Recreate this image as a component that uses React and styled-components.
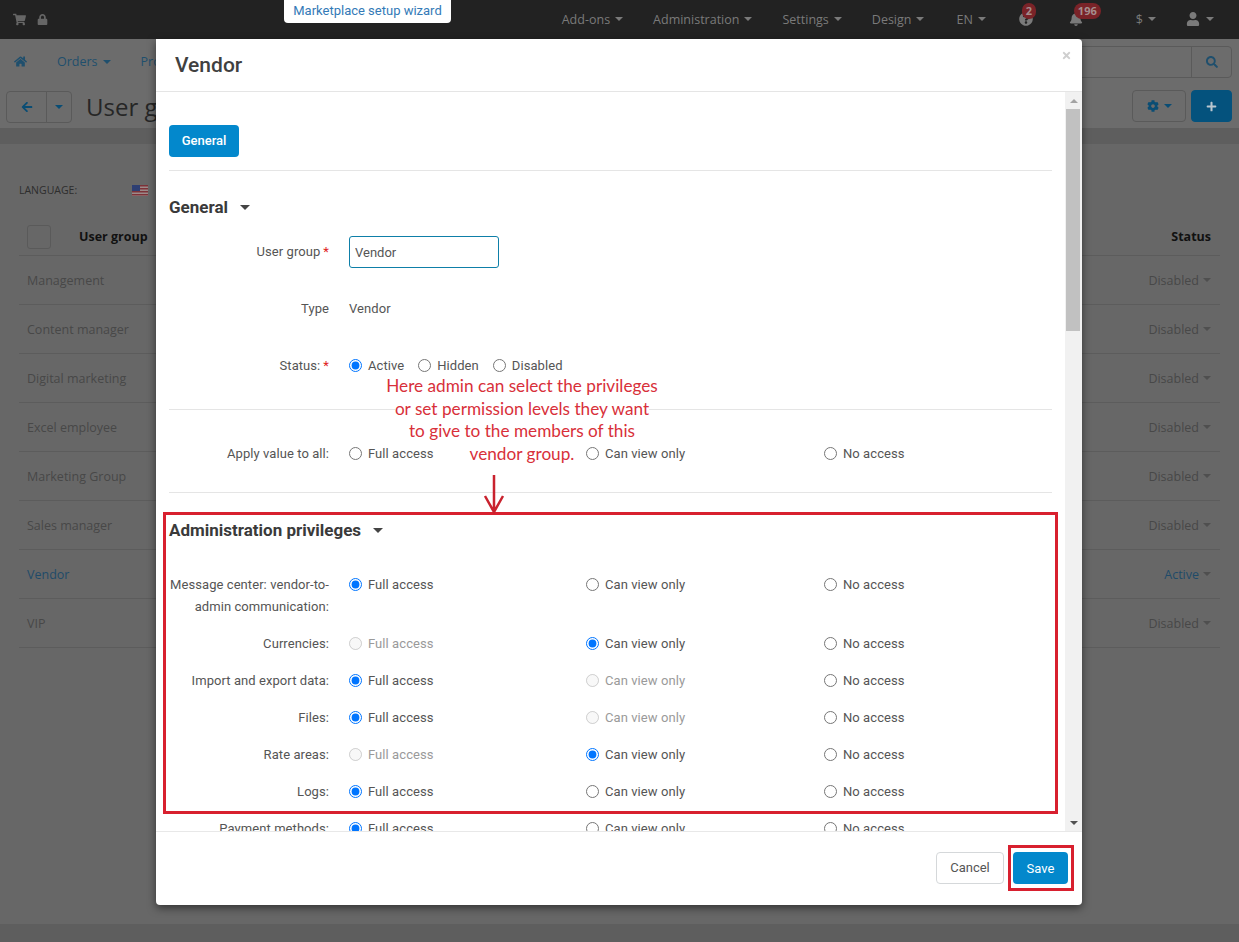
import React from "react";
import styled, { createGlobalStyle } from "styled-components";
import {
  FaShoppingCart,
  FaLock,
  FaHome,
  FaArrowLeft,
  FaSearch,
  FaCog,
  FaPlus,
  FaBell,
  FaUser,
  FaQuestionCircle,
  FaTimes,
} from "react-icons/fa";

const GlobalStyle = createGlobalStyle`
  html, body {
    margin: 0;
    padding: 0;
    background: #666;
  }
  * {
    box-sizing: border-box;
  }
`;

const Page = styled.div`
  position: relative;
  width: 1239px;
  height: 942px;
  overflow: hidden;
  display: flex;
  flex-direction: column;
  background: #676767;
  font-family: "Open Sans", sans-serif;
  font-size: 13px;
`;

/* top bar */
const TopBar = styled.header`
  height: 39px;
  flex: none;
  display: flex;
  align-items: center;
  justify-content: space-between;
  padding: 0 25px 1px 13px;
  background: #222;
  color: #7a7a7a;
`;

const BarGroup = styled.div`
  display: flex;
  align-items: center;
  gap: ${(props) => props.$gap || 11}px;
  color: ${(props) => props.$color || "inherit"};
`;

const NavItem = styled.span`
  display: flex;
  align-items: center;
  position: relative;
  gap: ${(props) => props.$space || 5}px;
  margin-left: ${(props) => props.$left || 0}px;
  font-size: 12.5px;
  white-space: nowrap;
`;

const Caret = styled.i`
  display: inline-block;
  width: 0;
  height: 0;
  border-left: ${(props) => props.$size || 4}px solid transparent;
  border-right: ${(props) => props.$size || 4}px solid transparent;
  border-top: ${(props) => props.$size || 4}px solid ${(props) => props.$color || "currentColor"};
`;

const Badge = styled.span`
  position: absolute;
  top: -9px;
  left: ${(props) => props.$left}px;
  height: 16px;
  padding: 0 4px;
  border-radius: 8px;
  background: #7a2328;
  color: #a58e8e;
  font-size: 11px;
  font-weight: 700;
  line-height: 16px;
`;

const WizardTab = styled.a`
  position: absolute;
  top: 0;
  left: 284px;
  width: 167px;
  height: 23px;
  background: #fff;
  border-radius: 0 0 4px 4px;
  color: #337ab7;
  font-family: Roboto, sans-serif;
  font-size: 13px;
  line-height: 21px;
  text-align: center;
  z-index: 3;
`;

/* header area */
const HeaderArea = styled.div`
  flex: none;
  height: 89px;
  background: #6c6c6c;
  display: flex;
  flex-direction: column;
`;

const SubNav = styled.nav`
  height: 46px;
  display: flex;
  align-items: center;
  justify-content: space-between;
  padding: 0 7px 1px 14px;
  color: #1f4f6d;
`;

const SubLinks = styled.div`
  display: flex;
  align-items: center;
  gap: 30px;
  font-size: 12.5px;
`;

const SubLink = styled.span`
  display: flex;
  align-items: center;
  gap: 5px;
`;

const SearchBox = styled.div`
  width: 180px;
  height: 32px;
  display: flex;
  justify-content: flex-end;
  border: 1px solid #5a5a5a;
  border-radius: 0 4px 4px 0;
`;

const SearchButton = styled.span`
  width: 40px;
  display: flex;
  align-items: center;
  justify-content: center;
  border-left: 1px solid #5a5a5a;
  color: #1f4f6d;
`;

const ToolBar = styled.div`
  height: 43px;
  display: flex;
  align-items: flex-start;
  justify-content: space-between;
  padding: 5px 7px 0 6px;
`;

const ToolLeft = styled.div`
  display: flex;
  align-items: center;
`;

const ToolButton = styled.span`
  height: 32px;
  width: ${(props) => props.$width}px;
  display: flex;
  align-items: center;
  justify-content: center;
  gap: 5px;
  border: 1px solid ${(props) => props.$bg || "#5a5a5a"};
  border-radius: ${(props) => props.$radius || "4px"};
  margin-left: ${(props) => props.$left || 0}px;
  background: ${(props) => props.$bg || "transparent"};
  color: ${(props) => props.$color || "#0a4d74"};
`;

const PageTitle = styled.h1`
  margin: 0 0 0 14px;
  color: #262626;
  font-size: 24px;
  font-weight: 400;
  line-height: 34px;
`;

const Strip = styled.div`
  flex: none;
  height: 16px;
  background: #5e5e5e;
`;

/* user groups table behind the dialog */
const Content = styled.main`
  flex: 1;
  padding: 0 19px;
`;

const Language = styled.div`
  display: flex;
  align-items: center;
  height: 12px;
  margin-top: 40px;
  color: #2d2d2d;
  font-size: 10.5px;
  text-transform: uppercase;
`;

const LanguageLabel = styled.span`
  width: 113px;
`;

const TableHead = styled.div`
  height: 31px;
  margin-top: 29px;
  padding: 0 9px 7px 8px;
  display: flex;
  align-items: center;
  justify-content: space-between;
  border-bottom: 1px solid #5c5c5c;
  color: #111;
  font-size: 12.5px;
  font-weight: 700;
`;

const HeadLeft = styled.div`
  display: flex;
  align-items: center;
  gap: 28px;
`;

const CheckCell = styled.span`
  width: 24px;
  height: 24px;
  border: 1px solid #5a5a5a;
  border-radius: 3px;
`;

const TableRow = styled.div`
  height: 49px;
  padding: 0 9px 0 8px;
  display: flex;
  align-items: center;
  justify-content: space-between;
  border-bottom: 1px solid #5c5c5c;
  color: ${(props) => (props.$active ? "#1f4b69" : "#484848")};
  font-size: 12.5px;
`;

const RowStatus = styled.span`
  display: flex;
  align-items: center;
  gap: 4px;
`;

const BottomStrip = styled.div`
  flex: none;
  height: 18px;
  background: #5e5e5e;
`;

/* dialog */
const Modal = styled.section`
  position: absolute;
  top: 39px;
  left: 156px;
  width: 926px;
  height: 866px;
  display: flex;
  flex-direction: column;
  background: #fff;
  border-radius: 0 4px 4px 4px;
  box-shadow: 0 3px 9px rgba(0, 0, 0, 0.5);
  color: #555;
  font-family: Roboto, sans-serif;
  font-size: 13px;
  z-index: 2;
`;

const ModalHeader = styled.div`
  height: 53px;
  flex: none;
  padding: 0 19px;
  display: flex;
  align-items: center;
  justify-content: space-between;
  border-bottom: 1px solid #e5e5e5;
`;

const ModalTitle = styled.h2`
  margin: 0;
  color: #404040;
  font-size: 21px;
  font-weight: 500;
`;

const CloseIcon = styled.span`
  position: absolute;
  top: 11px;
  right: 10px;
  color: #cfcfcf;
  font-size: 11px;
`;

const ModalBody = styled.div`
  flex: 1;
  min-height: 0;
  display: flex;
`;

const ScrollArea = styled.div`
  position: relative;
  flex: 1;
  min-width: 0;
  padding: 33px 13px 0;
  overflow: hidden;
`;

const Scrollbar = styled.div`
  width: 17px;
  flex: none;
  display: flex;
  flex-direction: column;
  justify-content: space-between;
  background: #f1f1f1;
`;

const ScrollArrow = styled.span`
  height: 17px;
  display: flex;
  align-items: center;
  justify-content: center;
  &::before {
    content: "";
    border-left: 4px solid transparent;
    border-right: 4px solid transparent;
    ${(props) =>
      props.$up ? "border-bottom: 4px solid #a3a3a3;" : "border-top: 4px solid #505050;"}
  }
`;

const ScrollThumb = styled.span`
  position: absolute;
  top: 17px;
  right: 2px;
  width: 14px;
  height: 222px;
  background: #c1c1c1;
`;

const ScrollColumn = styled.div`
  position: relative;
  display: flex;
`;

const TabButton = styled.button`
  display: block;
  width: 70px;
  height: 32px;
  padding: 0 0 2px;
  border: 0;
  border-radius: 4px;
  background: #0388cc;
  color: #fff;
  font-family: Roboto, sans-serif;
  font-size: 13px;
  font-weight: 500;
`;

const Rule = styled.hr`
  height: 1px;
  margin: ${(props) => props.$top}px 0 0;
  border: 0;
  background: #e5e5e5;
`;

const SectionTitle = styled.h3`
  display: flex;
  align-items: center;
  gap: 12px;
  height: 24px;
  margin: ${(props) => props.$top}px 0 0;
  color: #3a3a3a;
  font-size: 17px;
  font-weight: 700;
  line-height: 24px;
`;

const FieldRow = styled.div`
  display: flex;
  align-items: flex-start;
  margin-top: ${(props) => props.$top || 0}px;
  padding: ${(props) => (props.$tight ? "0" : "7px 0 8px")};
  line-height: 22px;
  letter-spacing: 0.07px;
`;

const FieldLabel = styled.label`
  flex: none;
  width: 160px;
  margin: 0 20px -1px 0;
  padding-top: 1px;
  text-align: right;
  line-height: ${(props) => props.$line || 22}px;
`;

const FieldValue = styled.span`
  margin-bottom: -1px;
  padding-top: 1px;
`;

const Required = styled.span`
  margin-left: 3px;
  color: #e02020;
`;

const TextInput = styled.input`
  width: 150px;
  height: 32px;
  padding: 0 5px;
  border: 1px solid #0e7fa8;
  border-radius: 3px;
  color: #555;
  font-family: Roboto, sans-serif;
  font-size: 13px;
`;

const StatusOptions = styled.div`
  display: flex;
  gap: 14px;
`;

const AccessOptions = styled.div`
  display: grid;
  grid-template-columns: 237px 238px 238px;
`;

const RadioOption = styled.label`
  display: flex;
  align-items: center;
  gap: 6px;
  height: 22px;
  color: ${(props) => (props.$off ? "#9a9a9a" : "#555")};
`;

const RadioText = styled.span`
  padding-top: 2px;
`;

const RadioInput = styled.input`
  flex: none;
  width: 13px;
  height: 13px;
  margin: 0;
`;

const PrivilegeBox = styled.div`
  margin: 19px -6px -4px;
  padding: 3px 3px 1px;
  border: 3px solid #d8202f;
`;

const AnnotationText = styled.p`
  position: absolute;
  top: 283px;
  left: 221px;
  width: 290px;
  margin: 0;
  color: #d8303a;
  font-family: Lato, sans-serif;
  font-size: 17.2px;
  line-height: 22.5px;
  text-align: center;
`;

const AnnotationLine = styled.span`
  background: #fff;
`;

const AnnotationArrow = styled.svg`
  position: absolute;
  top: 382px;
  left: 327px;
`;

const ModalFooter = styled.div`
  height: 74px;
  flex: none;
  display: flex;
  align-items: center;
  justify-content: flex-end;
  gap: 4px;
  padding: 0 8px 1px 0;
  border-top: 1px solid #e8e8e8;
`;

const CancelButton = styled.button`
  width: 68px;
  height: 32px;
  padding: 0 0 1px;
  border: 1px solid #d5d8da;
  border-radius: 4px;
  background: #fff;
  color: #555;
  font-family: Roboto, sans-serif;
  font-size: 13px;
`;

const SaveHighlight = styled.div`
  padding: 4px 3px 4px 2px;
  border: 3px solid #d8202f;
`;

const SaveButton = styled.button`
  display: block;
  width: 55px;
  height: 32px;
  padding: 0;
  border: 0;
  border-radius: 4px;
  background: #0388cc;
  color: #fff;
  font-family: Roboto, sans-serif;
  font-size: 13px;
`;

const groups = [
  { name: "Management", status: "Disabled" },
  { name: "Content manager", status: "Disabled" },
  { name: "Digital marketing", status: "Disabled" },
  { name: "Excel employee", status: "Disabled" },
  { name: "Marketing Group", status: "Disabled" },
  { name: "Sales manager", status: "Disabled" },
  { name: "Vendor", status: "Active", active: true },
  { name: "VIP", status: "Disabled" },
];

// checked = index of the picked option, off = index of the greyed out one
const privileges = [
  { label: "Currencies:", checked: 1, off: 0 },
  { label: "Import and export data:", checked: 0, off: 1 },
  { label: "Files:", checked: 0, off: 1 },
  { label: "Rate areas:", checked: 1, off: 0 },
  { label: "Logs:", checked: 0 },
];

const accessLevels = ["Full access", "Can view only", "No access"];

const annotation = [
  "Here admin can select the privileges",
  "or set permission levels they want",
  "to give to the members of this",
  "vendor group.",
];

const Flag = () => (
  <svg width="16" height="11" viewBox="0 0 16 11">
    <rect width="16" height="11" fill="#9c8a8a" />
    <rect y="0" width="16" height="1.5" fill="#7d3238" />
    <rect y="3" width="16" height="1.5" fill="#7d3238" />
    <rect y="6" width="16" height="1.5" fill="#7d3238" />
    <rect y="9" width="16" height="1.5" fill="#7d3238" />
    <rect width="8" height="6" fill="#2e3f73" />
  </svg>
);

const AccessRow = ({ name, checked, off }) => (
  <AccessOptions>
    {accessLevels.map((level, i) => (
      <RadioOption key={level} $off={off === i}>
        <RadioInput type="radio" name={name} defaultChecked={checked === i} disabled={off === i} />
        <RadioText>{level}</RadioText>
      </RadioOption>
    ))}
  </AccessOptions>
);

const App = () => {
  return (
    <Page>
      <GlobalStyle />
      <TopBar>
        <BarGroup $color="#666">
          <FaShoppingCart size={13} />
          <FaLock size={11} />
        </BarGroup>
        <BarGroup $gap={30}>
          <NavItem>Add-ons <Caret /></NavItem>
          <NavItem>Administration <Caret /></NavItem>
          <NavItem>Settings <Caret /></NavItem>
          <NavItem>Design <Caret /></NavItem>
          <NavItem $left={2}>EN <Caret /></NavItem>
          <NavItem $left={3}>
            <FaQuestionCircle size={14} />
            <Badge $left={3}>2</Badge>
          </NavItem>
          <NavItem $left={6}>
            <FaBell size={14} />
            <Badge $left={5}>196</Badge>
          </NavItem>
          <NavItem $left={23}>$ <Caret /></NavItem>
          <NavItem $space={6}>
            <FaUser size={14} />
            <Caret />
          </NavItem>
        </BarGroup>
      </TopBar>
      <WizardTab>Marketplace setup wizard</WizardTab>

      <HeaderArea>
        <SubNav>
          <SubLinks>
            <FaHome size={13} />
            <SubLink>Orders <Caret /></SubLink>
            <SubLink>Pro</SubLink>
          </SubLinks>
          <SearchBox>
            <SearchButton>
              <FaSearch size={12} />
            </SearchButton>
          </SearchBox>
        </SubNav>
        <ToolBar>
          <ToolLeft>
            <ToolButton $width={41} $radius="4px 0 0 4px">
              <FaArrowLeft size={12} />
            </ToolButton>
            <ToolButton $width={26} $left={-1} $radius="0 4px 4px 0">
              <Caret />
            </ToolButton>
            <PageTitle>User groups</PageTitle>
          </ToolLeft>
          <ToolLeft>
            <ToolButton $width={54}>
              <FaCog size={12} />
              <Caret />
            </ToolButton>
            <ToolButton $width={41} $left={5} $bg="#04527d" $color="#b9c6cf">
              <FaPlus size={11} />
            </ToolButton>
          </ToolLeft>
        </ToolBar>
      </HeaderArea>
      <Strip />

      <Content>
        <Language>
          <LanguageLabel>Language:</LanguageLabel>
          <Flag />
        </Language>
        <TableHead>
          <HeadLeft>
            <CheckCell />
            User group
          </HeadLeft>
          Status
        </TableHead>
        {groups.map((group) => (
          <TableRow key={group.name} $active={group.active}>
            {group.name}
            <RowStatus>
              {group.status} <Caret $color="#4f4f4f" />
            </RowStatus>
          </TableRow>
        ))}
      </Content>
      <BottomStrip />

      <Modal>
        <ModalHeader>
          <ModalTitle>Vendor</ModalTitle>
          <CloseIcon>
            <FaTimes />
          </CloseIcon>
        </ModalHeader>
        <ModalBody>
          <ScrollArea>
            <TabButton>General</TabButton>
            <Rule $top={13} />
            <SectionTitle $top={24}>General <Caret $size={5} $color="#444" /></SectionTitle>
            <FieldRow $tight $top={17}>
              <FieldLabel $line={30}>User group<Required>*</Required></FieldLabel>
              <TextInput defaultValue="Vendor" />
            </FieldRow>
            <FieldRow $tight $top={29}>
              <FieldLabel>Type</FieldLabel>
              <FieldValue>Vendor</FieldValue>
            </FieldRow>
            <FieldRow $tight $top={35}>
              <FieldLabel>Status:<Required>*</Required></FieldLabel>
              <StatusOptions>
                <RadioOption>
                  <RadioInput type="radio" name="status" defaultChecked />
                  <RadioText>Active</RadioText>
                </RadioOption>
                <RadioOption>
                  <RadioInput type="radio" name="status" />
                  <RadioText>Hidden</RadioText>
                </RadioOption>
                <RadioOption>
                  <RadioInput type="radio" name="status" />
                  <RadioText>Disabled</RadioText>
                </RadioOption>
              </StatusOptions>
            </FieldRow>
            <Rule $top={33} />
            <FieldRow $tight $top={32}>
              <FieldLabel>Apply value to all:</FieldLabel>
              <AccessRow name="all" />
            </FieldRow>
            <Rule $top={28} />

            <PrivilegeBox>
              <SectionTitle $top={0}>Administration privileges <Caret $size={5} $color="#444" /></SectionTitle>
              <FieldRow $top={24}>
                <FieldLabel>Message center: vendor-to-admin communication:</FieldLabel>
                <AccessRow name="messages" checked={0} />
              </FieldRow>
              {privileges.map((item) => (
                <FieldRow key={item.label}>
                  <FieldLabel>{item.label}</FieldLabel>
                  <AccessRow name={item.label} checked={item.checked} off={item.off} />
                </FieldRow>
              ))}
            </PrivilegeBox>
            <FieldRow>
              <FieldLabel>Payment methods:</FieldLabel>
              <AccessRow name="payment" checked={0} />
            </FieldRow>

            <AnnotationText>
              {annotation.map((line) => (
                <React.Fragment key={line}>
                  <AnnotationLine>{line}</AnnotationLine>
                  <br />
                </React.Fragment>
              ))}
            </AnnotationText>
            <AnnotationArrow width="22" height="40" viewBox="0 0 22 40">
              <path d="M11 1V37M2 22L11 38L20 22" fill="none" stroke="#c9222e" strokeWidth="2.5" />
            </AnnotationArrow>
          </ScrollArea>
          <ScrollColumn>
            <Scrollbar>
              <ScrollArrow $up />
              <ScrollArrow />
            </Scrollbar>
            <ScrollThumb />
          </ScrollColumn>
        </ModalBody>
        <ModalFooter>
          <CancelButton>Cancel</CancelButton>
          <SaveHighlight>
            <SaveButton>Save</SaveButton>
          </SaveHighlight>
        </ModalFooter>
      </Modal>
    </Page>
  );
};

export default App;
